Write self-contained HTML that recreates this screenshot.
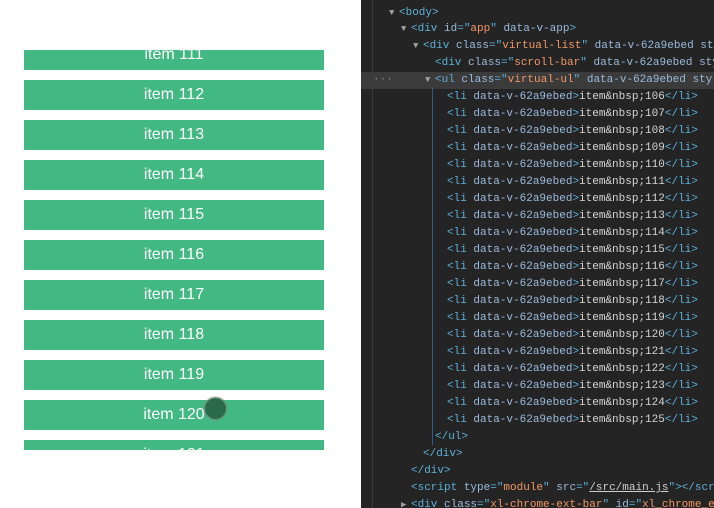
<!DOCTYPE html>
<html><head><style>
*{margin:0;padding:0;box-sizing:border-box}
body{width:714px;height:508px;overflow:hidden;background:#fff;position:relative;font-family:"Liberation Sans",sans-serif}
#left{position:absolute;left:0;top:0;width:361px;height:508px;background:#fff}
#clip{position:absolute;left:24px;top:50px;width:300px;height:400px;overflow:hidden}
.it{position:absolute;left:0;width:300px;height:30px;background:#42b883;color:#fff;font-size:16px;text-align:center;line-height:30px}
#cur{position:absolute;left:205px;top:398px;width:21px;height:21px;border-radius:50%;background:#2b6a49;box-shadow:0 0 0 1.5px rgba(120,140,130,.7)}
#dev{position:absolute;left:361px;top:0;width:353px;height:508px;background:#242424;font-family:"Liberation Mono",monospace;font-size:11px;color:#d5d5d5;overflow:hidden}
#gut{position:absolute;left:11px;top:0;width:1px;height:508px;background:#3a3a3a}
.row{position:absolute;left:0;height:17px;line-height:17px;white-space:pre;width:353px}
.hl{background:#3b3b3b}
.t{color:#5db0d7}.a{color:#9bbbdc}.v{color:#f29766}
.tri{position:absolute;color:#a0a0a0;font-size:9px}
#vl{position:absolute;left:71px;top:88px;width:1px;height:357px;background:#2f5d8a}
</style></head><body>
<div id="left"><div id="clip">
<div class="it" style="top:-10px">item 111</div>
<div class="it" style="top:30px">item 112</div>
<div class="it" style="top:70px">item 113</div>
<div class="it" style="top:110px">item 114</div>
<div class="it" style="top:150px">item 115</div>
<div class="it" style="top:190px">item 116</div>
<div class="it" style="top:230px">item 117</div>
<div class="it" style="top:270px">item 118</div>
<div class="it" style="top:310px">item 119</div>
<div class="it" style="top:350px">item 120</div>
<div class="it" style="top:390px">item 121</div>
</div><div id="cur"></div></div>
<div id="dev"><div id="gut"></div>
<div class="row" style="top:5px"><span class="tri" style="left:28px">▼</span><span style="position:absolute;left:38px"><span class="t">&lt;body&gt;</span></span></div>
<div class="row" style="top:21px"><span class="tri" style="left:40px">▼</span><span style="position:absolute;left:50px"><span class="t">&lt;div </span><span class="a">id</span><span class="t">="</span><span class="v">app</span><span class="t">"</span> <span class="a">data-v-app</span><span class="t">&gt;</span></span></div>
<div class="row" style="top:38px"><span class="tri" style="left:52px">▼</span><span style="position:absolute;left:62px"><span class="t">&lt;div </span><span class="a">class</span><span class="t">="</span><span class="v">virtual-list</span><span class="t">"</span> <span class="a">data-v-62a9ebed sty</span></span></div>
<div class="row" style="top:55px"><span style="position:absolute;left:74px"><span class="t">&lt;div </span><span class="a">class</span><span class="t">="</span><span class="v">scroll-bar</span><span class="t">"</span> <span class="a">data-v-62a9ebed sty</span></span></div>
<div class="row hl" style="top:72px"><span style="position:absolute;left:12px;color:#888">···</span><span class="tri" style="left:64px">▼</span><span style="position:absolute;left:74px"><span class="t">&lt;ul </span><span class="a">class</span><span class="t">="</span><span class="v">virtual-ul</span><span class="t">"</span> <span class="a">data-v-62a9ebed styl</span></span></div>
<div id="vl"></div>
<div class="row" style="top:89px"><span style="position:absolute;left:86px"><span class="t">&lt;li </span><span class="a">data-v-62a9ebed</span><span class="t">&gt;</span>item&amp;nbsp;106<span class="t">&lt;/li&gt;</span></span></div>
<div class="row" style="top:106px"><span style="position:absolute;left:86px"><span class="t">&lt;li </span><span class="a">data-v-62a9ebed</span><span class="t">&gt;</span>item&amp;nbsp;107<span class="t">&lt;/li&gt;</span></span></div>
<div class="row" style="top:123px"><span style="position:absolute;left:86px"><span class="t">&lt;li </span><span class="a">data-v-62a9ebed</span><span class="t">&gt;</span>item&amp;nbsp;108<span class="t">&lt;/li&gt;</span></span></div>
<div class="row" style="top:140px"><span style="position:absolute;left:86px"><span class="t">&lt;li </span><span class="a">data-v-62a9ebed</span><span class="t">&gt;</span>item&amp;nbsp;109<span class="t">&lt;/li&gt;</span></span></div>
<div class="row" style="top:157px"><span style="position:absolute;left:86px"><span class="t">&lt;li </span><span class="a">data-v-62a9ebed</span><span class="t">&gt;</span>item&amp;nbsp;110<span class="t">&lt;/li&gt;</span></span></div>
<div class="row" style="top:174px"><span style="position:absolute;left:86px"><span class="t">&lt;li </span><span class="a">data-v-62a9ebed</span><span class="t">&gt;</span>item&amp;nbsp;111<span class="t">&lt;/li&gt;</span></span></div>
<div class="row" style="top:191px"><span style="position:absolute;left:86px"><span class="t">&lt;li </span><span class="a">data-v-62a9ebed</span><span class="t">&gt;</span>item&amp;nbsp;112<span class="t">&lt;/li&gt;</span></span></div>
<div class="row" style="top:208px"><span style="position:absolute;left:86px"><span class="t">&lt;li </span><span class="a">data-v-62a9ebed</span><span class="t">&gt;</span>item&amp;nbsp;113<span class="t">&lt;/li&gt;</span></span></div>
<div class="row" style="top:225px"><span style="position:absolute;left:86px"><span class="t">&lt;li </span><span class="a">data-v-62a9ebed</span><span class="t">&gt;</span>item&amp;nbsp;114<span class="t">&lt;/li&gt;</span></span></div>
<div class="row" style="top:242px"><span style="position:absolute;left:86px"><span class="t">&lt;li </span><span class="a">data-v-62a9ebed</span><span class="t">&gt;</span>item&amp;nbsp;115<span class="t">&lt;/li&gt;</span></span></div>
<div class="row" style="top:259px"><span style="position:absolute;left:86px"><span class="t">&lt;li </span><span class="a">data-v-62a9ebed</span><span class="t">&gt;</span>item&amp;nbsp;116<span class="t">&lt;/li&gt;</span></span></div>
<div class="row" style="top:276px"><span style="position:absolute;left:86px"><span class="t">&lt;li </span><span class="a">data-v-62a9ebed</span><span class="t">&gt;</span>item&amp;nbsp;117<span class="t">&lt;/li&gt;</span></span></div>
<div class="row" style="top:293px"><span style="position:absolute;left:86px"><span class="t">&lt;li </span><span class="a">data-v-62a9ebed</span><span class="t">&gt;</span>item&amp;nbsp;118<span class="t">&lt;/li&gt;</span></span></div>
<div class="row" style="top:310px"><span style="position:absolute;left:86px"><span class="t">&lt;li </span><span class="a">data-v-62a9ebed</span><span class="t">&gt;</span>item&amp;nbsp;119<span class="t">&lt;/li&gt;</span></span></div>
<div class="row" style="top:327px"><span style="position:absolute;left:86px"><span class="t">&lt;li </span><span class="a">data-v-62a9ebed</span><span class="t">&gt;</span>item&amp;nbsp;120<span class="t">&lt;/li&gt;</span></span></div>
<div class="row" style="top:344px"><span style="position:absolute;left:86px"><span class="t">&lt;li </span><span class="a">data-v-62a9ebed</span><span class="t">&gt;</span>item&amp;nbsp;121<span class="t">&lt;/li&gt;</span></span></div>
<div class="row" style="top:361px"><span style="position:absolute;left:86px"><span class="t">&lt;li </span><span class="a">data-v-62a9ebed</span><span class="t">&gt;</span>item&amp;nbsp;122<span class="t">&lt;/li&gt;</span></span></div>
<div class="row" style="top:378px"><span style="position:absolute;left:86px"><span class="t">&lt;li </span><span class="a">data-v-62a9ebed</span><span class="t">&gt;</span>item&amp;nbsp;123<span class="t">&lt;/li&gt;</span></span></div>
<div class="row" style="top:395px"><span style="position:absolute;left:86px"><span class="t">&lt;li </span><span class="a">data-v-62a9ebed</span><span class="t">&gt;</span>item&amp;nbsp;124<span class="t">&lt;/li&gt;</span></span></div>
<div class="row" style="top:412px"><span style="position:absolute;left:86px"><span class="t">&lt;li </span><span class="a">data-v-62a9ebed</span><span class="t">&gt;</span>item&amp;nbsp;125<span class="t">&lt;/li&gt;</span></span></div>
<div class="row" style="top:429px"><span style="position:absolute;left:74px" class="t">&lt;/ul&gt;</span></div>
<div class="row" style="top:446px"><span style="position:absolute;left:62px" class="t">&lt;/div&gt;</span></div>
<div class="row" style="top:463px"><span style="position:absolute;left:50px" class="t">&lt;/div&gt;</span></div>
<div class="row" style="top:480px"><span style="position:absolute;left:50px"><span class="t">&lt;script </span><span class="a">type</span><span class="t">="</span><span class="v">module</span><span class="t">"</span> <span class="a">src</span><span class="t">="</span><span style="color:#cfcfcf;text-decoration:underline">/src/main.js</span><span class="t">"&gt;&lt;/script&gt;</span></span></div>
<div class="row" style="top:497px"><span class="tri" style="left:40px">▶</span><span style="position:absolute;left:50px"><span class="t">&lt;div </span><span class="a">class</span><span class="t">="</span><span class="v">xl-chrome-ext-bar</span><span class="t">"</span> <span class="a">id</span><span class="t">="</span><span class="v">xl_chrome_ext</span></span></div>
</div>
</body></html>
